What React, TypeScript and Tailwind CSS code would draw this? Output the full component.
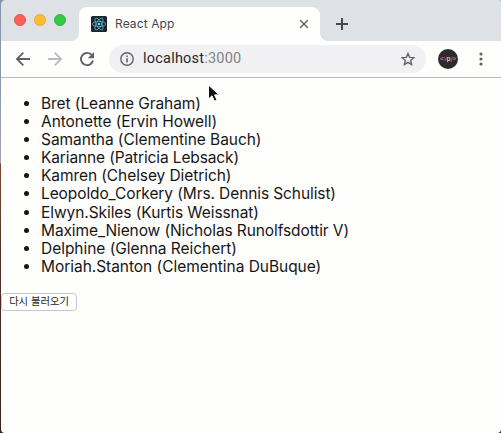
const users = [
  { username: 'Bret', name: 'Leanne Graham', tracking: 'tracking-[-0.08px]' },
  { username: 'Antonette', name: 'Ervin Howell', tracking: 'tracking-[-0.06px]' },
  { username: 'Samantha', name: 'Clementine Bauch', tracking: 'tracking-[-0.06px]' },
  { username: 'Karianne', name: 'Patricia Lebsack', tracking: 'tracking-[-0.13px]' },
  { username: 'Kamren', name: 'Chelsey Dietrich', tracking: 'tracking-[-0.08px]' },
  { username: 'Leopoldo_Corkery', name: 'Mrs. Dennis Schulist', tracking: 'tracking-[-0.1px]' },
  { username: 'Elwyn.Skiles', name: 'Kurtis Weissnat', tracking: 'tracking-[-0.07px]' },
  { username: 'Maxime_Nienow', name: 'Nicholas Runolfsdottir V', tracking: 'tracking-[-0.1px]' },
  { username: 'Delphine', name: 'Glenna Reichert', tracking: 'tracking-[-0.03px]' },
  { username: 'Moriah.Stanton', name: 'Clementina DuBuque', tracking: 'tracking-[-0.04px]' },
];

function ReactLogo() {
  return (
    <svg width="16" height="16" viewBox="0 0 16 16" fill="none" stroke="#4fb3cf" strokeWidth="0.8">
      <rect width="16" height="16" rx="1.5" fill="#202328" stroke="none" />
      <ellipse cx="8" cy="8" rx="6.7" ry="2.6" />
      <ellipse cx="8" cy="8" rx="6.7" ry="2.6" transform="rotate(60 8 8)" />
      <ellipse cx="8" cy="8" rx="6.7" ry="2.6" transform="rotate(120 8 8)" />
      <circle cx="8" cy="8" r="1.3" fill="#61dafb" stroke="none" />
    </svg>
  );
}

function TabStrip() {
  return (
    <div className="bg-[#dee1e6] pt-[7px]">
      <div className="flex h-[34px] bg-[#fefefd]">
        <div className="flex w-[78px] gap-2 rounded-br-lg bg-[#dee1e6] pt-[7px] pl-[13px]">
          <i className="size-3 rounded-full border border-[#e9514b] bg-[#fc605b]" />
          <i className="size-3 rounded-full border border-[#e8a936] bg-[#fdbc33]" />
          <i className="size-3 rounded-full border border-[#30b740] bg-[#34c845]" />
        </div>
        <div className="w-[241px] bg-[#dee1e6]">
          <div className="flex h-full items-center rounded-t-lg bg-[#fefefd] pr-[11px] pl-3">
            <ReactLogo />
            <span className="ml-2 text-[12px] tracking-[0.1px] text-[#45484c]">React App</span>
            <svg className="ml-auto" width="10" height="10" viewBox="0 0 10 10" stroke="#606367" strokeWidth="1.5">
              <path d="M1.2 1.2l7.6 7.6M8.8 1.2L1.2 8.8" />
            </svg>
          </div>
        </div>
        <div className="flex-1 rounded-bl-lg bg-[#dee1e6] pt-[11px] pl-4">
          <svg width="12" height="12" viewBox="0 0 12 12" stroke="#45484c" strokeWidth="2">
            <path d="M6 0v12M0 6h12" />
          </svg>
        </div>
      </div>
    </div>
  );
}

function Toolbar() {
  return (
    <div className="flex h-[37px] items-center border-b border-[#b6b8bb] bg-[#fefefd] pl-[14px]">
      <svg width="16" height="16" viewBox="0 0 16 16" fill="none" stroke="#5f6368" strokeWidth="1.9">
        <path d="M15 8H2.5M8.3 1.7L2 8l6.3 6.3" />
      </svg>
      <svg className="ml-4" width="16" height="16" viewBox="0 0 16 16" fill="none" stroke="#b9bbbe" strokeWidth="1.8">
        <path d="M1 8h12.5M7.7 1.7L14 8l-6.3 6.3" />
      </svg>
      <svg className="ml-4" width="16" height="16" viewBox="0 0 16 16" fill="none">
        <path d="M12.6 3.9A6.1 6.1 0 1 0 14 9.6" stroke="#5f6368" strokeWidth="1.9" />
        <path d="M15 1v6.2H8.8z" fill="#5f6368" />
      </svg>
      <div className="ml-[14px] flex h-7 w-[317px] items-center rounded-full bg-[#f1f1f4] pr-[11px] pl-[11px]">
        <svg width="14" height="14" viewBox="0 0 14 14" fill="none" stroke="#5f6368" strokeWidth="1.4">
          <circle cx="7" cy="7" r="6.2" />
          <path d="M7 6.2v4.2M7 3.4v1.5" strokeWidth="1.6" />
        </svg>
        <span className="ml-[9px] font-[Roboto,sans-serif] text-[14.5px] tracking-[0.22px] text-[#26282c]">
          localhost<span className="text-[#808387]">:3000</span>
        </span>
        <svg className="ml-auto" width="14" height="14" viewBox="0 0 14 14" fill="none" stroke="#5f6368" strokeWidth="1.35">
          <path d="M7 1.4l1.65 3.9 4.25.37-3.22 2.8.96 4.15L7 10.4l-3.64 2.22.96-4.15L1.1 5.67l4.25-.37z" />
        </svg>
      </div>
      <div className="ml-3 flex size-5 items-center justify-center rounded-full bg-[#2b2b2d] text-[6px] leading-none font-medium tracking-[-0.2px] text-[#a8a8aa]">
        &lt;<span className="text-[#d83464]">v</span><span className="text-[#e0dfe0]">p</span>/&gt;
      </div>
      <svg className="ml-[21px]" width="4" height="14" viewBox="0 0 4 14" fill="#5f6368">
        <circle cx="2" cy="2" r="1.6" />
        <circle cx="2" cy="7" r="1.6" />
        <circle cx="2" cy="12" r="1.6" />
      </svg>
    </div>
  );
}

export default function App() {
  return (
    <div className="relative h-[433px] w-[501px] overflow-hidden bg-[linear-gradient(#8294ad_0px,#8f99aa_90px,#a4a3aa_163px,#7b4936_164px,#543126_250px,#362120_433px)] pl-px font-[Inter,'Noto_Sans_CJK_KR',sans-serif]">
      <div className="h-full overflow-hidden rounded-tl-[5px] rounded-tr-[3px] rounded-b-[4px] bg-[#fefefd]">
        <TabStrip />
        <Toolbar />
        <main className="pt-[17px]">
          <ul className="list-disc pl-10 text-[15.5px] leading-[18.1px] text-[#161616]">
            {users.map((user) => (
              <li key={user.username}>
                <span className={user.tracking}>
                  {user.username} ({user.name})
                </span>
              </li>
            ))}
          </ul>
          <button className="mt-[17px] block h-[18px] w-[76px] rounded-[4px] border border-[#c6c6ce] bg-white text-[10.3px] leading-[15px] whitespace-nowrap text-[#242424]">
            다시 불러오기
          </button>
        </main>
      </div>
      <svg className="absolute top-[83px] left-[206px]" width="16" height="22" viewBox="0 0 16 22">
        <path d="M2.5 2v14l3.5-3.2 2.4 5.4 2.6-1.2-2.4-5.1h4.5z" fill="#111" stroke="#fff" strokeWidth="1" />
      </svg>
    </div>
  );
}
